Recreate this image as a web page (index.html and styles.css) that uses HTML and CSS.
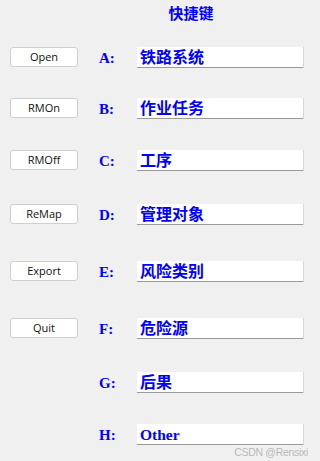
FILE: index.html
```html
<!DOCTYPE html>
<html lang="zh-CN">

<head>
    <meta charset="UTF-8">
    <meta name="viewport" content="width=device-width, initial-scale=1.0">
    <title>快捷键</title>
    <link rel="stylesheet" href="styles.css">
</head>

<body>
    <div class="win">
        <div class="title">快捷键</div>
        <!--按钮 + 快捷键列表-->
        <div class="key-grid">
            <button class="cmd-btn">Open</button>
            <label class="key-label">A:</label>
            <div class="key-input">铁路系统</div>

            <button class="cmd-btn">RMOn</button>
            <label class="key-label">B:</label>
            <div class="key-input">作业任务</div>

            <button class="cmd-btn">RMOff</button>
            <label class="key-label">C:</label>
            <div class="key-input">工序</div>

            <button class="cmd-btn">ReMap</button>
            <label class="key-label">D:</label>
            <div class="key-input">管理对象</div>

            <button class="cmd-btn">Export</button>
            <label class="key-label">E:</label>
            <div class="key-input">风险类别</div>

            <button class="cmd-btn">Quit</button>
            <label class="key-label">F:</label>
            <div class="key-input">危险源</div>

            <span></span>
            <label class="key-label">G:</label>
            <div class="key-input">后果</div>

            <span></span>
            <label class="key-label">H:</label>
            <div class="key-input key-latin">Other</div>
        </div>
        <div class="watermark">CSDN @Rensixi</div>
    </div>
</body>

</html>
```

FILE: styles.css
```css
html,
body {
    margin: 0px;
    padding: 0px;
}

body {
    background: #f0f0f0;
    font-family: "Liberation Serif", "Noto Sans CJK SC", serif;
}

.win {
    position: relative;
    width: 320px;
    height: 461px;
    overflow: hidden;
}

.title {
    width: 224px;
    margin: 2px 0px 0px 79px;
    height: 22px;
    line-height: 22px;
    text-align: center;
    font-family: "Noto Sans CJK SC", sans-serif;
    font-weight: bold;
    font-size: 15px;
    color: #0000ff;
}

.key-grid {
    display: grid;
    grid-template-columns: 68px 59px 166px;
    grid-template-rows: 51px 52px 54px 57px 57px 54px 52px 21px;
    margin: 23px 0px 0px 10px;
}

.key-grid > * {
    align-self: start;
}

.cmd-btn {
    width: 68px;
    height: 20px;
    margin: 0px;
    padding: 0px;
    background: #ffffff;
    border: #cfcfcf solid 1px;
    border-radius: 3px;
    font-family: "Open Sans", "Noto Sans", sans-serif;
    font-size: 11px;
    color: #111111;
    line-height: 18px;
}

.key-label {
    margin-left: 21px;
    height: 21px;
    line-height: 22px;
    font-weight: bold;
    font-size: 15px;
    color: #0000ff;
}

.key-input {
    height: 20px;
    line-height: 18px;
    padding-left: 3px;
    background: #ffffff;
    border-bottom: #9a9a9a solid 1px;
    box-shadow: 1px 0px 0px #d6d6d6;
    font-family: "Noto Sans CJK SC", sans-serif;
    font-weight: bold;
    font-size: 16px;
    color: #0000ff;
}

.key-latin {
    line-height: 21px;
    font-family: "Liberation Serif", serif;
    font-size: 15.5px;
}

.watermark {
    position: absolute;
    right: 12px;
    bottom: 3px;
    font-family: "Liberation Sans", sans-serif;
    font-size: 10.5px;
    letter-spacing: -0.3px;
    color: #b4b4b4;
    text-shadow: 0px 0px 1px #ffffff;
}
```
